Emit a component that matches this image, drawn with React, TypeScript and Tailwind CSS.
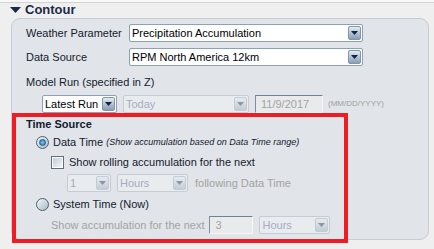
import React from 'react';

const font = "font-['Liberation_Sans',Arial,sans-serif]";

function Arrow({ disabled }: { disabled?: boolean }) {
  return (
    <span
      className={`my-[1px] mr-[1px] flex w-[13px] items-center justify-center rounded-[2px] border bg-linear-to-b ${
        disabled
          ? 'border-[#c3ccd4] from-[#e6ebef] to-[#c3ccd5]'
          : 'border-[#7f95aa] from-[#e4eaf0] to-[#8a9eb2]'
      }`}
    >
      <svg width="7" height="4" viewBox="0 0 7 4">
        <path d="M0 0h7L3.5 4z" fill={disabled ? '#8c97a3' : '#10224a'} />
      </svg>
    </span>
  );
}

function Select({
  value,
  className,
  disabled,
}: {
  value: string;
  className: string;
  disabled?: boolean;
}) {
  return (
    <div
      className={`flex h-[18px] shrink-0 items-stretch rounded-[2px] border ${className} ${
        disabled
          ? 'border-[#c5cdd4] bg-[#e9ecef] text-[#a7aac2]'
          : 'border-[#8aa1b6] bg-white text-black'
      }`}
    >
      <span className="flex-1 truncate pl-[2px] text-[11px] leading-[16px]">{value}</span>
      <Arrow disabled={disabled} />
    </div>
  );
}

function Input({ value, className }: { value: string; className: string }) {
  return (
    <div
      className={`h-[18px] shrink-0 border border-t-[#6f8294] border-l-[#7d8fa0] border-r-[#f6f6f6] border-b-[#f6f6f6] bg-[#e9eaec] pl-[5px] text-[11px] leading-[16px] text-[#a3a3a3] ${className}`}
    >
      {value}
    </div>
  );
}

function Radio({ checked }: { checked?: boolean }) {
  return (
    <span className="flex h-[13px] w-[13px] shrink-0 items-center justify-center rounded-full border border-[#4f6171] bg-linear-to-br from-[#f4f7f9] to-[#a9b9c6]">
      {checked && (
        <span className="h-[7px] w-[7px] rounded-full border border-[#1d5f8f] bg-radial from-[#7cc4f0] to-[#1f74ae]" />
      )}
    </span>
  );
}

function Checkbox() {
  return (
    <span className="flex h-[13px] w-[13px] shrink-0 border border-[#5e6f7e] bg-white p-[1px]">
      <span className="flex-1 bg-linear-to-br from-[#c3ced7] to-[#f1f4f6]" />
    </span>
  );
}

export default function App() {
  return (
    <div className={`relative h-[249px] w-[434px] overflow-hidden bg-[#efefef] ${font}`}>
      <div className="h-[3px] border-b border-[#d3d3d3] bg-[#f8f8f8]" />
      <div className="flex h-[13px] items-center pl-[10px]">
        <svg width="11" height="6" viewBox="0 0 11 6">
          <path d="M0 0h11L5.5 6z" fill="#1b2a49" />
        </svg>
        <span className="ml-[4px] text-[13px] font-bold leading-[13px] text-[#1b2a49]">Contour</span>
      </div>

      <div className="ml-[11px] mt-[2px] h-[222px] w-[418px] rounded-[9px] border border-[#c6ccd2] bg-[#e1e4e8] pl-[14px] pt-[5px] text-[11px] text-[#131b30]">
        <div className="flex h-[18px] items-center">
          <span className="w-[103px]">Weather Parameter</span>
          <Select value="Precipitation Accumulation" className="w-[234px]" />
        </div>
        <div className="mt-[6px] flex h-[18px] items-center">
          <span className="w-[103px]">Data Source</span>
          <Select value="RPM North America 12km" className="w-[234px]" />
        </div>
        <div className="mt-[10px] h-[13px] leading-[13px]">Model Run (specified in Z)</div>
        <div className="ml-[16px] mt-[6px] flex h-[18px] items-center">
          <Select value="Latest Run" className="w-[75px]" />
          <Select value="Today" className="ml-[6px] w-[126px]" disabled />
          <Input value="11/9/2017" className="ml-[6px] w-[68px]" />
          <span className="ml-[5px] text-[8px] text-[#a0a0a0]">(MM/DD/YYYY)</span>
        </div>

        <div className="mt-[5px] h-[13px] font-bold leading-[13px]">Time Source</div>
        <div className="ml-[10px] mt-[5px] flex h-[13px] items-center">
          <Radio checked />
          <span className="ml-[4px] leading-[13px]">Data Time</span>
          <span className="ml-[3px] text-[9px] italic leading-[13px]">
            (Show accumulation based on Data Time range)
          </span>
        </div>
        <div className="ml-[25px] mt-[7px] flex h-[13px] items-center">
          <Checkbox />
          <span className="ml-[5px] leading-[13px]">Show rolling accumulation for the next</span>
        </div>
        <div className="ml-[41px] mt-[5px] flex h-[18px] items-center">
          <Select value="1" className="w-[44px]" disabled />
          <Select value="Hours" className="ml-[6px] w-[71px]" disabled />
          <span className="ml-[7px] text-[#a3a3a3]">following Data Time</span>
        </div>
        <div className="ml-[10px] mt-[6px] flex h-[13px] items-center">
          <Radio />
          <span className="ml-[4px] leading-[13px]">System Time (Now)</span>
        </div>
        <div className="ml-[25px] mt-[5px] flex h-[18px] items-center">
          <span className="text-[#a3a3a3]">Show accumulation for the next</span>
          <Input value="3" className="ml-[5px] w-[44px]" />
          <Select value="Hours" className="ml-[6px] w-[71px]" disabled />
        </div>
      </div>

      <div className="pointer-events-none absolute left-[12px] top-[113px] h-[130px] w-[336px] border-4 border-[#ee1c25]" />
    </div>
  );
}
